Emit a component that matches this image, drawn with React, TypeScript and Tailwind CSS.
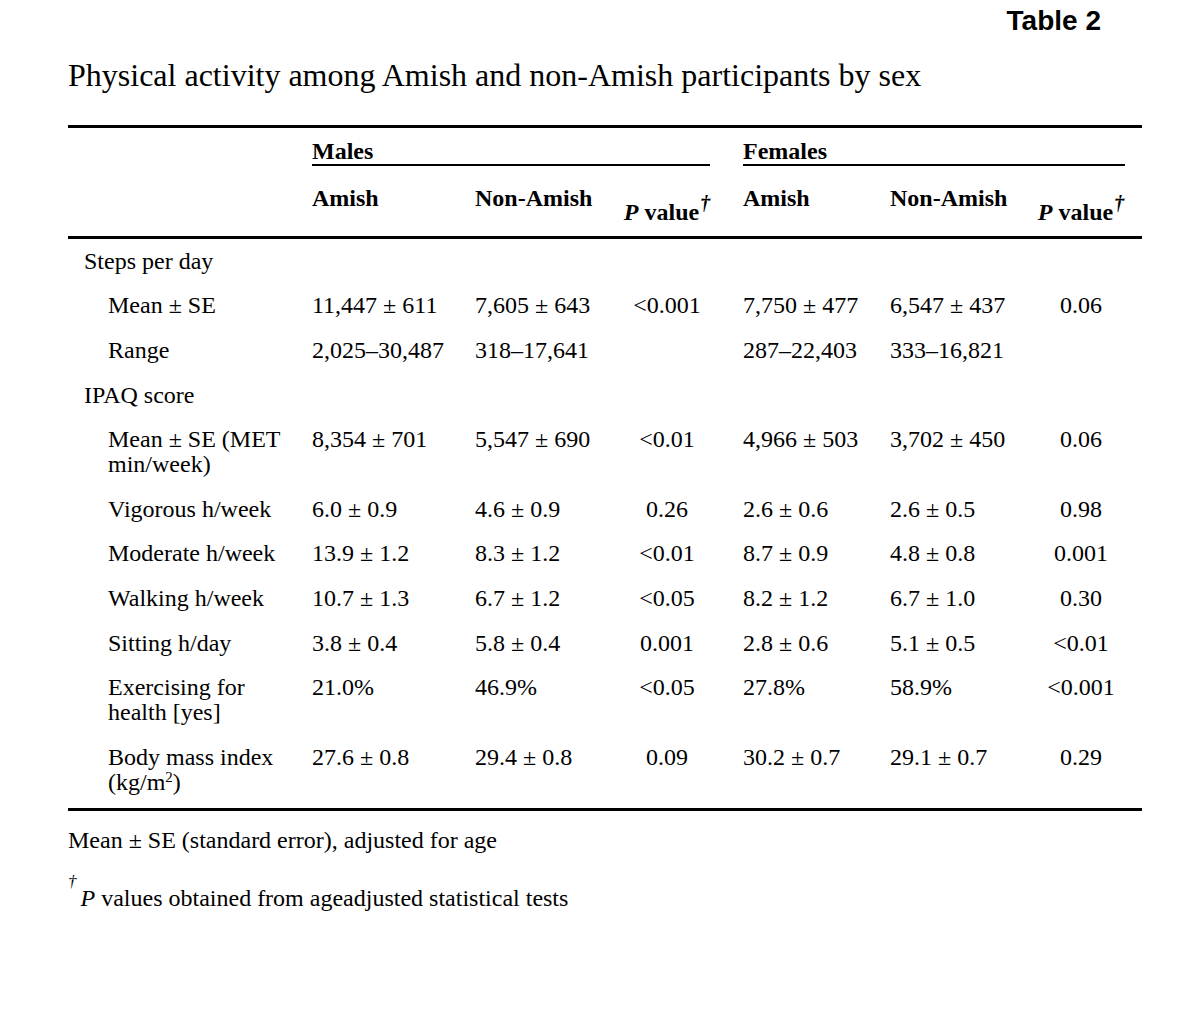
import React from "react";

type Row = {
  label: string[];
  group?: boolean;
  v?: string[];
};

const rows: Row[] = [
  { label: ["Steps per day"], group: true },
  { label: ["Mean ± SE"], v: ["11,447 ± 611", "7,605 ± 643", "<0.001", "7,750 ± 477", "6,547 ± 437", "0.06"] },
  { label: ["Range"], v: ["2,025–30,487", "318–17,641", "", "287–22,403", "333–16,821", ""] },
  { label: ["IPAQ score"], group: true },
  { label: ["Mean ± SE (MET", "min/week)"], v: ["8,354 ± 701", "5,547 ± 690", "<0.01", "4,966 ± 503", "3,702 ± 450", "0.06"] },
  { label: ["Vigorous h/week"], v: ["6.0 ± 0.9", "4.6 ± 0.9", "0.26", "2.6 ± 0.6", "2.6 ± 0.5", "0.98"] },
  { label: ["Moderate h/week"], v: ["13.9 ± 1.2", "8.3 ± 1.2", "<0.01", "8.7 ± 0.9", "4.8 ± 0.8", "0.001"] },
  { label: ["Walking h/week"], v: ["10.7 ± 1.3", "6.7 ± 1.2", "<0.05", "8.2 ± 1.2", "6.7 ± 1.0", "0.30"] },
  { label: ["Sitting h/day"], v: ["3.8 ± 0.4", "5.8 ± 0.4", "0.001", "2.8 ± 0.6", "5.1 ± 0.5", "<0.01"] },
  { label: ["Exercising for", "health [yes]"], v: ["21.0%", "46.9%", "<0.05", "27.8%", "58.9%", "<0.001"] },
];

function PValueHead() {
  return (
    <div className="pt-[14px] text-center font-bold whitespace-nowrap">
      <span className="italic">P</span> value
      <span className="relative -top-[10px] ml-[1px] text-[20px] italic">†</span>
    </div>
  );
}

// index 2 and 5 are P value columns, centered
function Cells({ v }: { v: string[] }) {
  return (
    <>
      {v.map((x, i) => (
        <div key={i} className={i === 2 || i === 5 ? "text-center whitespace-nowrap" : "whitespace-nowrap"}>
          {x}
        </div>
      ))}
    </>
  );
}

export default function App() {
  const cols = "grid grid-cols-[244px_163px_116px_152px_147px_130px_122px]";

  return (
    <div className="w-[1200px] h-[1033px] bg-white text-black font-['Liberation_Serif','Times_New_Roman',serif] text-[24px] leading-[25px] pl-[68px]">
      <div className="w-[1074px]">
        {/* Table number */}
        <div className="pt-[5px] mr-[41px] text-right font-['Liberation_Sans',Arial,sans-serif] font-bold text-[28px] leading-[32px]">
          Table 2
        </div>

        <h1 className="mt-[20px] text-[32px] leading-[36px]">
          Physical activity among Amish and non-Amish participants by sex
        </h1>

        <div className="mt-[32px] h-[3px] bg-black" />

        {/* header */}
        <div className={cols + " pt-[11px] font-bold"}>
          <div />
          <div className="col-span-3 mr-[33px] border-b-2 border-black">Males</div>
          <div className="col-span-3 mr-[17px] border-b-2 border-black">Females</div>
        </div>
        <div className={cols + " pt-[20px] pb-[10px] items-start"}>
          <div />
          <div className="font-bold whitespace-nowrap">Amish</div>
          <div className="font-bold whitespace-nowrap">Non-Amish</div>
          <PValueHead />
          <div className="font-bold whitespace-nowrap">Amish</div>
          <div className="font-bold whitespace-nowrap">Non-Amish</div>
          <PValueHead />
        </div>

        <div className="h-[3px] bg-black" />

        {/* body */}
        {rows.map((r, idx) => (
          <div key={idx} className={cols + " py-[9.8px]"}>
            <div className={r.group ? "pl-[16px]" : "pl-[40px]"}>
              {r.label.map((l, j) => (
                <div key={j}>{l}</div>
              ))}
            </div>
            {r.v && <Cells v={r.v} />}
          </div>
        ))}
        <div className={cols + " pt-[9.8px] pb-[13px]"}>
          <div className="pl-[40px]">
            <div>Body mass index</div>
            <div>
              (kg/m<sup className="text-[15px]">2</sup>)
            </div>
          </div>
          <Cells v={["27.6 ± 0.8", "29.4 ± 0.8", "0.09", "30.2 ± 0.7", "29.1 ± 0.7", "0.29"]} />
        </div>

        <div className="h-[3px] bg-black" />

        {/* footnotes */}
        <p className="mt-[17px]">Mean ± SE (standard error), adjusted for age</p>
        <p className="mt-[33px]">
          <span className="relative -top-[19px] text-[17px] italic">†</span>
          <span className="ml-[4px] italic">P</span> values obtained from ageadjusted statistical tests
        </p>
      </div>
    </div>
  );
}
